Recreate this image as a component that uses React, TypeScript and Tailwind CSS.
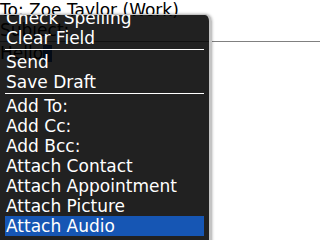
const ITEMS: (string | null)[] = [
  'Check Spelling',
  'Clear Field',
  null,
  'Send',
  'Save Draft',
  null,
  'Add To:',
  'Add Cc:',
  'Add Bcc:',
  'Attach Contact',
  'Attach Appointment',
  'Attach Picture',
  'Attach Audio',
]

const SELECTED = 'Attach Audio'

export default function App() {
  return (
    <div
      className="relative w-[320px] h-[240px] overflow-hidden bg-white text-black text-[17px] leading-[20px]"
      style={{ fontFamily: '"DejaVu Sans", sans-serif' }}
    >
      {/* compose screen behind the menu */}
      <div className="flex flex-col">
        <div className="h-[20px] whitespace-nowrap">To: Zoe Taylor (Work)</div>
        <div className="h-[21px] whitespace-nowrap">Subject:</div>
        <div className="h-px bg-[#808080]" />
        <div className="flex items-center h-[20px] mt-[1px]">
          <span>Hello</span>
          <span className="w-[9px] h-[17px] bg-[#1a56b0]" />
        </div>
      </div>

      {/* options menu */}
      <div className="absolute left-0 top-[14px] w-[212px] h-[240px] rounded-tr-[7px] bg-black/[0.87] border-r-[3px] border-t border-[#c4c4c4] shadow-[0_0_3px_rgba(0,0,0,0.35)] overflow-hidden text-white">
        <div className="flex flex-col mt-[-7px]">
          {ITEMS.map((item, i) =>
            item === null ? (
              <div key={i} className="h-[4px] mx-[5px] pt-[1px]">
                <div className="h-px bg-white" />
              </div>
            ) : (
              <div
                key={i}
                className={
                  'h-[20px] mx-[5px] pl-[1px] whitespace-nowrap ' +
                  (item === SELECTED ? 'bg-[#1656b4]' : '')
                }
              >
                {item}
              </div>
            )
          )}
        </div>
      </div>
    </div>
  )
}
